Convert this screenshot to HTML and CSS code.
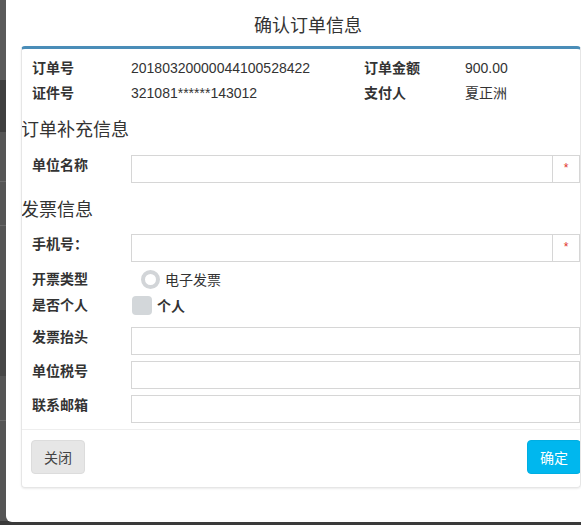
FILE: index.html
```html
<!DOCTYPE html>
<html lang="zh-CN">
<head>
<meta charset="utf-8">
<title>确认订单信息</title>
<link rel="stylesheet" href="styles.css">
</head>
<body>
<div class="modal">
  <div class="modal-header">确认订单信息</div>
  <div class="panel">
    <div class="info">
      <div class="info-row">
        <span class="k">订单号</span><span class="v">20180320000044100528422</span>
        <span class="k2">订单金额</span><span class="v2">900.00</span>
      </div>
      <div class="info-row">
        <span class="k">证件号</span><span class="v">321081******143012</span>
        <span class="k2">支付人</span><span class="v2">夏正洲</span>
      </div>
    </div>

    <div class="section s1">订单补充信息</div>
    <div class="field f-unit">
      <label class="lbl">单位名称</label>
      <div class="group"><div class="input"></div><div class="addon">*</div></div>
    </div>

    <div class="section s2">发票信息</div>
    <div class="field f-phone">
      <label class="lbl">手机号：</label>
      <div class="group"><div class="input"></div><div class="addon">*</div></div>
    </div>

    <div class="opt o-type">
      <label class="lbl">开票类型</label>
      <span class="radio"></span><span class="opt-text">电子发票</span>
    </div>
    <div class="opt o-person">
      <label class="lbl">是否个人</label>
      <span class="check"></span><span class="opt-text bold">个人</span>
    </div>

    <div class="field f-title">
      <label class="lbl">发票抬头</label>
      <div class="group"><div class="input"></div></div>
    </div>
    <div class="field f-tax">
      <label class="lbl">单位税号</label>
      <div class="group"><div class="input"></div></div>
    </div>
    <div class="field f-mail">
      <label class="lbl">联系邮箱</label>
      <div class="group"><div class="input"></div></div>
    </div>

    <div class="footer">
      <button class="btn btn-close">关闭</button>
      <button class="btn btn-ok">确定</button>
    </div>
  </div>
</div>
</body>
</html>
```

FILE: styles.css
```css
html, body {
  margin: 0;
  padding: 0;
  width: 581px;
  height: 525px;
  overflow: hidden;
}
body {
  font-family: "Liberation Sans", "Noto Sans CJK SC", sans-serif;
  color: #333;
  background: linear-gradient(to bottom,
    #5a5a5a 0, #5a5a5a 80px,
    #3f3f3f 80px, #3f3f3f 132px,
    #565656 132px, #565656 181px,
    #6a6a6a 181px, #6a6a6a 182px,
    #555 182px, #555 225px,
    #6a6a6a 225px, #6a6a6a 226px,
    #555 226px, #555 310px,
    #474747 310px, #474747 376px,
    #555 376px, #555 420px,
    #6a6a6a 420px, #6a6a6a 421px,
    #555 421px, #555 521px,
    #3a3a3a 521px);
}
.modal {
  margin-left: 6px;
  width: 604px;
  height: 522px;
  background: #fff;
  border-radius: 0 0 6px 6px;
  overflow: hidden;
}
.modal-header {
  height: 46px;
  box-sizing: border-box;
  padding-top: 7px;
  line-height: 38px;
  font-size: 18px;
  text-align: center;
  color: #333;
}
.panel {
  margin-left: 15px;
  width: 560px;
  box-sizing: border-box;
  border: 1px solid #e6e6e6;
  border-top: 3px solid #4a8db8;
  border-radius: 4px;
  box-shadow: 0 1px 2px rgba(0,0,0,0.08);
  overflow: hidden;
}
.info {
  padding-top: 7px;
}
.info-row {
  display: flex;
  height: 25px;
  line-height: 25px;
  font-size: 14px;
}
.info-row .k {
  width: 99px;
  padding-left: 10px;
  font-weight: bold;
}
.info-row .v {
  width: 233px;
}
.info-row .k2 {
  width: 101px;
  font-weight: bold;
}
.section {
  font-size: 18px;
  line-height: 24px;
  height: 24px;
  margin-left: -1px;
}
.s1 { margin-top: 12px; }
.s2 { margin-top: 15px; }
.lbl {
  width: 99px;
  padding-left: 10px;
  flex: none;
  font-size: 14px;
  font-weight: bold;
  line-height: 20px;
}
.field {
  display: flex;
  align-items: flex-start;
}
.f-unit { margin-top: 13px; }
.f-phone { margin-top: 12px; }
.f-title { margin-top: 11px; }
.f-tax, .f-mail { margin-top: 6px; }
.group {
  display: flex;
  width: 449px;
  height: 28px;
}
.input {
  flex: 1;
  box-sizing: border-box;
  border: 1px solid #d6d6d6;
  background: #fff;
}
.addon {
  width: 27px;
  box-sizing: border-box;
  border: 1px solid #d6d6d6;
  border-left: none;
  color: #e0322b;
  font-size: 12px;
  text-align: center;
  line-height: 24px;
}
.opt {
  display: flex;
  align-items: center;
  height: 22px;
}
.opt .lbl { line-height: 22px; }
.o-type { margin-top: 6px; }
.o-person { margin-top: 4px; }
.radio {
  width: 19px;
  height: 19px;
  box-sizing: border-box;
  border: 4px solid #d2d5d8;
  border-radius: 50%;
  margin-left: 10px;
  background: #fff;
}
.check {
  width: 20px;
  height: 19px;
  border-radius: 4px;
  background: #d3d7da;
  margin-left: 1px;
}
.opt-text {
  font-size: 14px;
  margin-left: 5px;
}
.o-type .opt-text { margin-left: 5px; }
.bold { font-weight: bold; }
.footer {
  margin-top: 6px;
  border-top: 1px solid #eeeeee;
  padding: 10px 0 13px 9px;
  display: flex;
  justify-content: space-between;
}
.btn {
  height: 34px;
  width: 54px;
  border-radius: 4px;
  font-family: "Liberation Sans", "Noto Sans CJK SC", sans-serif;
  font-size: 14px;
  padding: 0;
  cursor: pointer;
}
.btn-close {
  background: #e6e6e6;
  border: 1px solid #dcdcdc;
  color: #444;
}
.btn-ok {
  background: #00b7ee;
  border: 1px solid #00aee2;
  color: #fff;
  margin-right: -1px;
}
```
